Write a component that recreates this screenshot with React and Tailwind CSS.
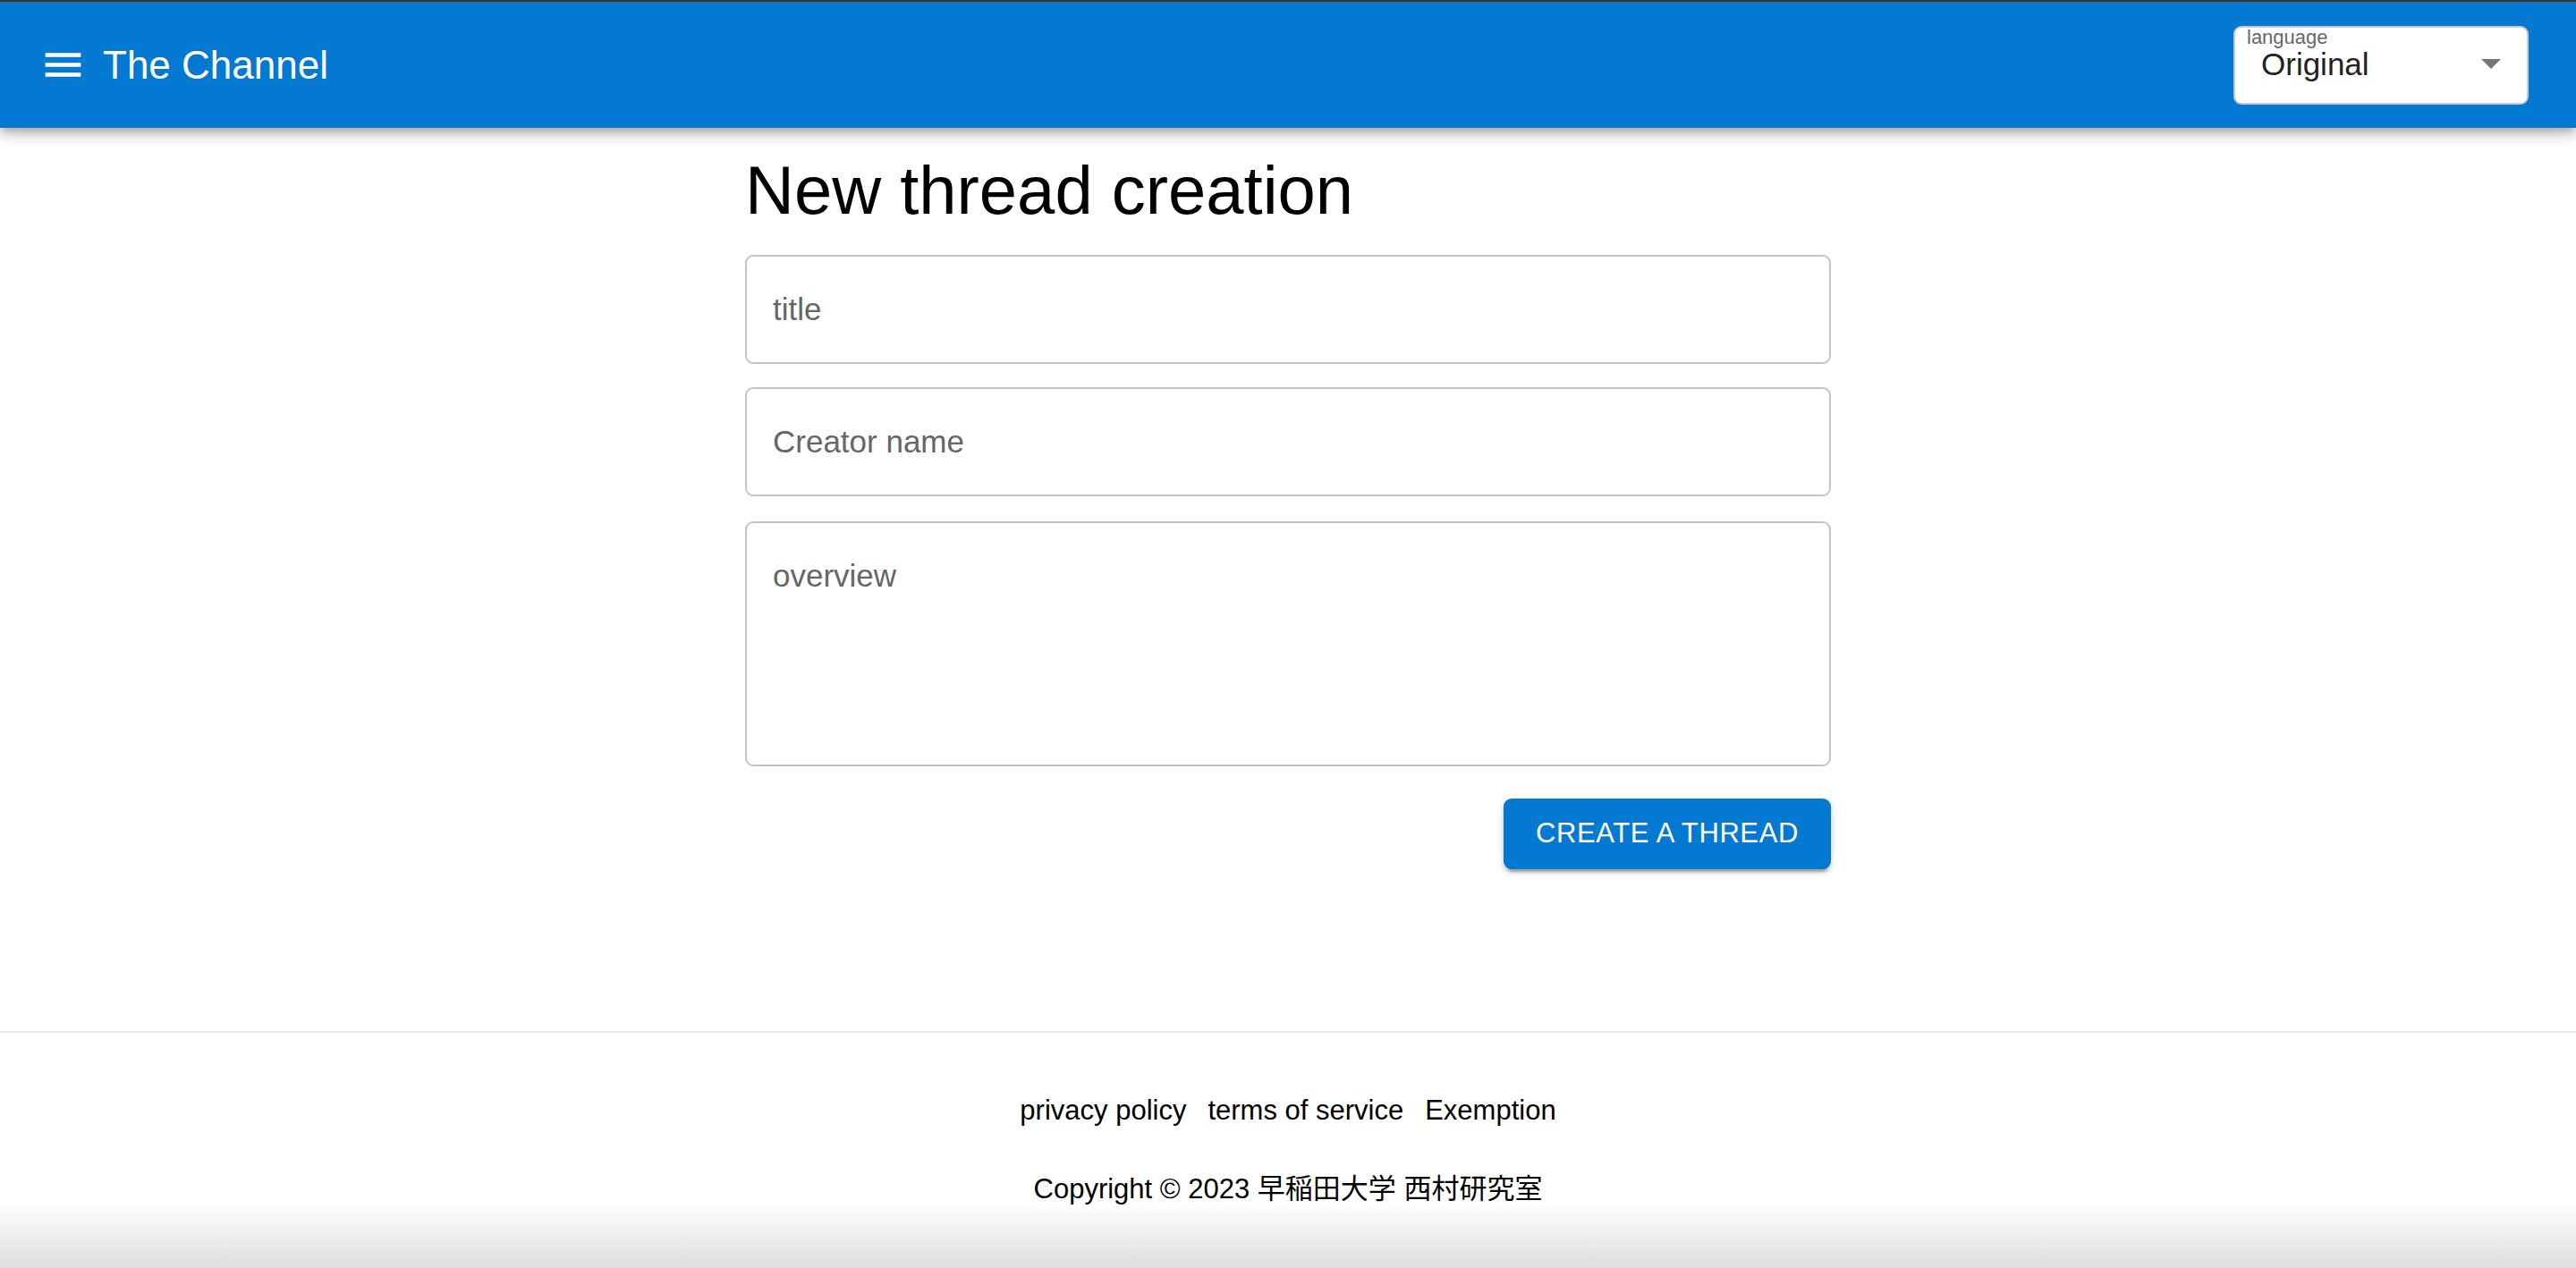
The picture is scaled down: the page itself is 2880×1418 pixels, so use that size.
import React from 'react'

const FONT = "font-['Liberation_Sans','Noto_Sans_CJK_JP',Arial,sans-serif]"

function MenuIcon() {
  return (
    <svg viewBox="0 0 24 24" className="w-[53px] h-[53px]" fill="white">
      <path d="M3 18h18v-2H3v2zm0-5h18v-2H3v2zm0-7v2h18V6H3z" />
    </svg>
  )
}

function LanguageSelect() {
  return (
    <div className="w-[330px] h-[88px] bg-white border-2 border-[#c9c9c9] rounded-[9px] pl-[13px] pr-[29px]">
      <div className="text-[22px] leading-[22px] text-[#666]">language</div>
      <div className="flex items-center justify-between h-[38px]">
        <span className="ml-[16px] text-[35px] leading-[38px] text-[#222]">Original</span>
        <svg viewBox="7 10 10 5" className="w-[22px] h-[11px]" fill="#757575">
          <path d="M7 10l5 5 5-5z" />
        </svg>
      </div>
    </div>
  )
}

function Field({ label, tall }) {
  if (tall) {
    return (
      <textarea
        placeholder={label}
        className="block w-full h-[274px] resize-none border-2 border-[#c4c4c4] rounded-[9px] px-[29px] pt-[34px] text-[35px] leading-[50px] text-[#222] placeholder:text-[#666] outline-none"
      />
    )
  }
  return (
    <input
      placeholder={label}
      className="block w-full h-[122px] border-2 border-[#c4c4c4] rounded-[9px] px-[29px] text-[35px] leading-[50px] text-[#222] placeholder:text-[#666] outline-none"
    />
  )
}

export default function App() {
  return (
    <div className={`${FONT} min-h-screen flex flex-col bg-white`}>
      <div className="h-[2px] bg-[#3a3a3a]" />
      <header className="relative z-10 h-[141px] bg-[#0479d1] flex items-center justify-between pl-[44px] pr-[53px] shadow-[0_4px_9px_-2px_rgba(0,0,0,0.2),0_9px_11px_0_rgba(0,0,0,0.14),0_2px_22px_0_rgba(0,0,0,0.12)]">
        <div className="flex items-center">
          <MenuIcon />
          <span className="ml-[18px] text-[44px] leading-none text-white">The Channel</span>
        </div>
        <LanguageSelect />
      </header>

      <main className="flex-1">
        <div className="w-[1214px] mx-auto pt-[24px] flex flex-col">
          <h1 className="text-[76px] leading-[92px] text-black mb-[26px]">New thread creation</h1>
          <Field label="title" />
          <div className="h-[26px]" />
          <Field label="Creator name" />
          <div className="h-[28px]" />
          <Field label="overview" tall />
          <button className="self-end mt-[36px] w-[366px] h-[79px] rounded-[9px] bg-[#0479d1] text-white text-[31px] tracking-[0.6px] shadow-[0_7px_2px_-4px_rgba(0,0,0,0.2),0_4px_4px_0_rgba(0,0,0,0.14),0_2px_11px_0_rgba(0,0,0,0.12)]">
            CREATE A THREAD
          </button>
        </div>
      </main>

      <footer className="h-[265px] border-t-2 border-[#e6e6e6] bg-[linear-gradient(to_bottom,#ffffff_72%,#dedede)] pt-[63px] text-black text-[31px] leading-[48px]">
        <div className="flex justify-center gap-[24px]">
          <a>privacy policy</a>
          <a>terms of service</a>
          <a>Exemption</a>
        </div>
        <div className="mt-[40px] text-center">Copyright © 2023 早稲田大学 西村研究室</div>
      </footer>
    </div>
  )
}
